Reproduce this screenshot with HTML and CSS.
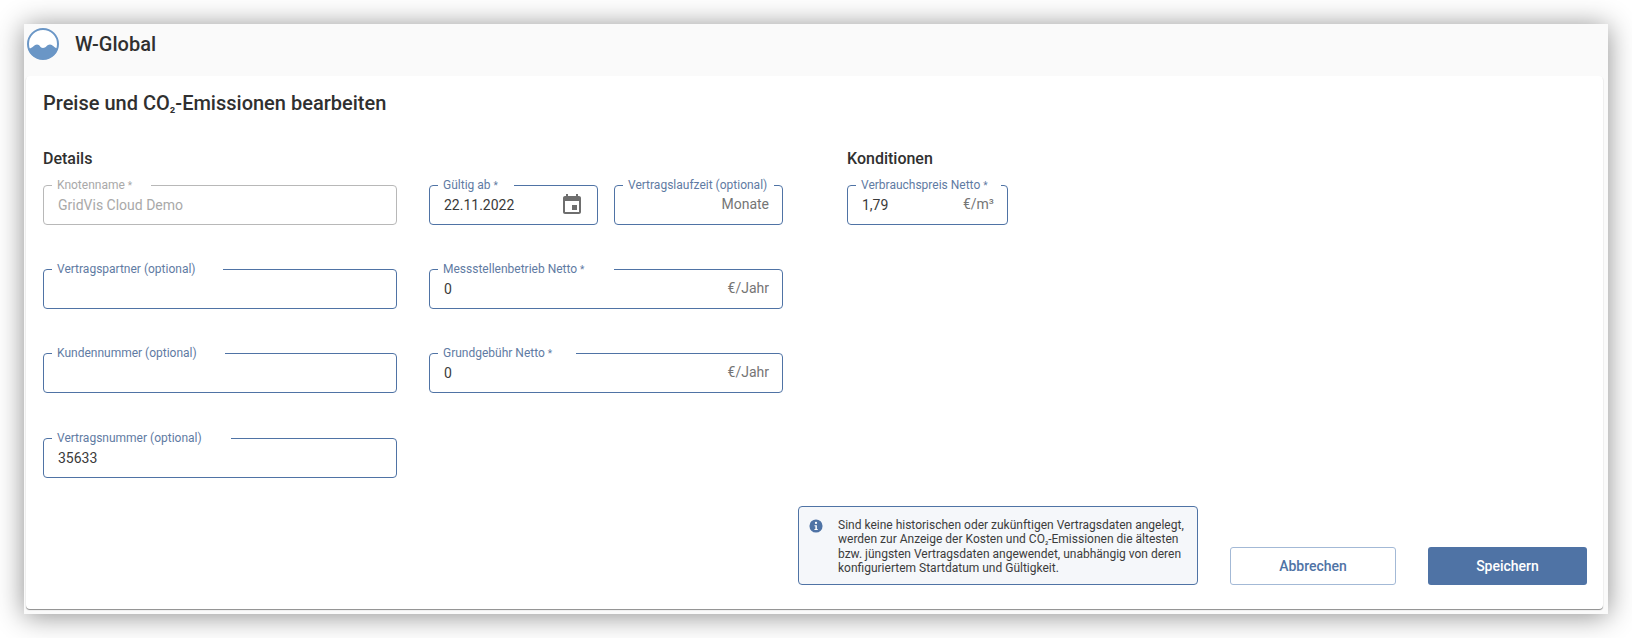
FILE: index.html
```html
<!DOCTYPE html>
<html lang="de">
<head>
<meta charset="utf-8">
<title>Preise und CO₂-Emissionen bearbeiten</title>
<link rel="stylesheet" href="styles.css">
</head>
<body>
<div class="window">
  <header class="topbar">
    <svg class="logo" viewBox="0 0 32 32" aria-hidden="true">
      <circle cx="16" cy="16" r="15" fill="#fff" stroke="#6a96c6" stroke-width="2"/>
      <path d="M1.500 20C4 22 7 16.500 10 16.500S13 20 16 20s4-3.500 7-3.500 5 4.500 7.500 3.500C30 26 24 31 16 31S2 26 1.500 20z" fill="#6a96c6"/>
    </svg>
    <span class="brand">W-Global</span>
  </header>
  <main class="card">
    <h1 class="title">Preise und CO<span class="sub">₂</span>-Emissionen bearbeiten</h1>
    <div class="form">
      <section class="col col-wide">
        <h2 class="section-title">Details</h2>
        <div class="field field-disabled">
          <span class="label n19">Knotenname <i>*</i></span>
          <span class="value">GridVis Cloud Demo</span>
        </div>
        <div class="field">
          <span class="label n27">Vertragspartner (optional)</span>
        </div>
        <div class="field">
          <span class="label n28">Kundennummer (optional)</span>
        </div>
        <div class="field">
          <span class="label n29">Vertragsnummer (optional)</span>
          <span class="value">35633</span>
        </div>
      </section>
      <section class="col col-wide">
        <div class="section-spacer"></div>
        <div class="pair">
          <div class="field">
            <span class="label n16">Gültig ab <i>*</i></span>
            <span class="value">22.11.2022</span>
            <svg class="cal" viewBox="0 0 24 24" aria-hidden="true"><path d="M17 12h-5v5h5v-5zM16 1v2H8V1H6v2H5c-1.110 0-1.990.9-1.990 2L3 19c0 1.100.89 2 2 2h14c1.100 0 2-.9 2-2V5c0-1.100-.9-2-2-2h-1V1h-2zm3 18H5V8h14v11z"/></svg>
          </div>
          <div class="field">
            <span class="label n7">Vertragslaufzeit (optional)</span>
            <span class="unit">Monate</span>
          </div>
        </div>
        <div class="field">
          <span class="label n30">Messstellenbetrieb Netto <i>*</i></span>
          <span class="value">0</span>
          <span class="unit">€/Jahr</span>
        </div>
        <div class="field">
          <span class="label n24">Grundgebühr Netto <i>*</i></span>
          <span class="value">0</span>
          <span class="unit">€/Jahr</span>
        </div>
      </section>
      <section class="col col-narrow">
        <h2 class="section-title">Konditionen</h2>
        <div class="field">
          <span class="label n13">Verbrauchspreis Netto <i>*</i></span>
          <span class="value">1,79</span>
          <span class="unit">€/m³</span>
        </div>
      </section>
    </div>
    <footer class="actions">
      <div class="notice">
        <svg class="info" viewBox="0 0 16 16" aria-hidden="true">
          <circle cx="8" cy="8" r="7.500" fill="#4f73a5"/>
          <circle cx="8" cy="4.500" r="1.300" fill="#fff"/>
          <path d="M6.300 7h2.700v4.300h1v1.200H6.200v-1.200h1.100V8.200h-1z" fill="#fff"/>
        </svg>
        <p class="notice-text">Sind keine historischen oder zukünftigen Vertragsdaten angelegt, werden zur Anzeige der Kosten und CO<span class="sub">₂</span>-Emissionen die ältesten bzw. jüngsten Vertragsdaten angewendet, unabhängig von deren konfiguriertem Startdatum und Gültigkeit.</p>
      </div>
      <button class="btn btn-secondary" type="button">Abbrechen</button>
      <button class="btn btn-primary" type="button">Speichern</button>
    </footer>
  </main>
</div>
</body>
</html>
```

FILE: styles.css
```css
* { box-sizing: border-box; }
html, body { height: 100%; }
body {
  margin: 0;
  padding: 24px;
  height: 638px;
  overflow: hidden;
  background: #fff;
  font-family: Roboto, "Liberation Sans", sans-serif;
  color: #333;
}
.window {
  height: 590px;
  display: flex;
  flex-direction: column;
  background: #fafafa;
  box-shadow: 0 2px 26px rgba(0, 0, 0, .45);
  padding: 0 5px 5px 2px;
}
.topbar {
  height: 52px;
  flex: none;
  display: flex;
  align-items: flex-start;
  padding: 4px 0 0 1px;
}
.logo { width: 32px; height: 32px; flex: none; }
.brand {
  margin: 5px 0 0 16px;
  font-size: 20px;
  line-height: 23px;
  font-weight: 500;
  color: #303030;
}
.card {
  flex: 1;
  min-height: 0;
  display: flex;
  flex-direction: column;
  background: #fff;
  border-radius: 4px;
  box-shadow: 0 1px 1px rgba(0, 0, 0, .45);
  padding: 15px 16px 24px 17px;
}
.title {
  margin: 0;
  height: 24px;
  font-size: 20px;
  line-height: 24px;
  font-weight: 500;
  color: #303030;
}
.sub { font-size: .75em; line-height: 1; }
.form {
  display: flex;
  gap: 32px;
  margin-top: 34px;
  flex: 1;
}
.col {
  display: flex;
  flex-direction: column;
  gap: 44.300px;
}
.col-wide { width: 354px; }
.col-narrow { width: 161px; margin-left: 32px; }
.section-title {
  margin: 0 0 -27.700px;
  height: 19px;
  font-size: 16px;
  line-height: 19px;
  font-weight: 500;
  color: #303030;
}
.section-spacer { height: 19px; margin-bottom: -27.700px; }
.pair { display: flex; gap: 16px; }
.pair .field { flex: 1; }
.field {
  position: relative;
  height: 40px;
  display: flex;
  align-items: center;
  justify-content: space-between;
  border: 1px solid #4f73a5;
  border-radius: 4px;
  padding: 0 13px 0 14px;
}
.label {
  position: absolute;
  top: -7px;
  left: 8px;
  padding-left: 5px;
  background: #fff;
  font-size: 12px;
  line-height: 13px;
  color: #5f7ba3;
  white-space: nowrap;
}
.label i { font-style: normal; font-size: 10px; }
.n7 { padding-right: 7px; }
.n13 { padding-right: 13px; }
.n16 { padding-right: 16px; }
.n19 { padding-right: 19px; }
.n24 { padding-right: 24px; }
.n27 { padding-right: 27px; }
.n28 { padding-right: 28px; }
.n29 { padding-right: 29px; }
.n30 { padding-right: 30px; }
.value { font-size: 14px; line-height: 16px; color: #3a3a3a; }
.unit { font-size: 14px; line-height: 16px; color: #757575; margin-left: auto; margin-bottom: 2px; }
.field-disabled { border-color: #b8b8b8; }
.field-disabled .label { color: #a9a9a9; }
.field-disabled .value { color: #a9a9a9; }
.cal { width: 24px; height: 24px; fill: #6e6e6e; }
.actions {
  display: flex;
  align-items: flex-end;
  flex: none;
}
.notice {
  margin-left: 755px;
  width: 400px;
  height: 79px;
  display: flex;
  align-items: flex-start;
  gap: 15px;
  padding: 11px 12px 0 10px;
  background: #f5f7fa;
  border: 1px solid #4f73a5;
  border-radius: 4px;
}
.info { width: 14px; height: 14px; flex: none; margin-top: 1px; }
.notice-text {
  margin: 0;
  font-size: 12px;
  line-height: 14.400px;
  color: #3c3c3c;
}
.btn {
  height: 38px;
  font-family: inherit;
  font-size: 14px;
  font-weight: 500;
  border-radius: 3px;
  padding: 0;
}
.btn-secondary {
  width: 166px;
  margin-left: 32px;
  background: #fff;
  color: #4f73a5;
  border: 1px solid #a3b9d6;
}
.btn-primary {
  width: 159px;
  margin-left: 32px;
  background: #4f73a5;
  color: #fff;
  border: 0;
}
```
